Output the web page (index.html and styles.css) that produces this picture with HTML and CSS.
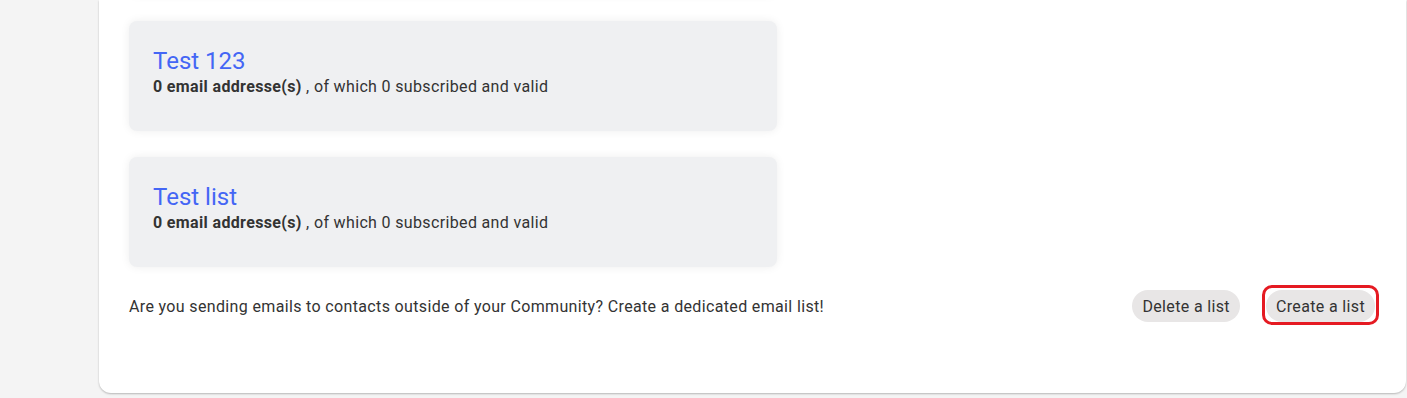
FILE: index.html
```html
<!DOCTYPE html>
<html lang="en">
<head>
    <meta charset="UTF-8">
    <title>Email lists</title>
    <link rel="stylesheet" href="styles.css">
</head>
<body>
<div class="page">
    <div class="side"></div>
    <div class="panel">
        <div class="lists">
            <!-- previous list, scrolled out of view -->
            <div class="card"></div>
            <div class="card">
                <a class="card-title">Test 123</a>
                <p class="card-info"><b>0 email addresse(s)</b> , of which 0 subscribed and valid</p>
            </div>
            <div class="card">
                <a class="card-title">Test list</a>
                <p class="card-info"><b>0 email addresse(s)</b> , of which 0 subscribed and valid</p>
            </div>
        </div>
        <div class="footer">
            <p>Are you sending emails to contacts outside of your Community? Create a dedicated email list!</p>
            <div class="actions">
                <button class="btn">Delete a list</button>
                <button class="btn marked">Create a list</button>
            </div>
        </div>
    </div>
</div>
</body>
</html>
```

FILE: styles.css
```css
html, body {
    margin: 0;
    height: 100%;
    background: #f4f4f4;
    font-family: Roboto, "Liberation Sans", sans-serif;
    color: #333;
    overflow: hidden;
}

.page {
    display: flex;
    height: 393px;
}
.side {
    width: 99px;
    flex: none;
}
.panel {
    width: 1307px;
    background: #fff;
    border-radius: 0 0 12px 12px;
    box-shadow: 0 1px 2px rgba(0,0,0,0.25);
    padding: 0 31px 0 30px;
    box-sizing: border-box;
    display: flex;
    flex-direction: column;
}

.lists {
    display: flex;
    flex-direction: column;
    gap: 26px;
    margin-top: -115px;
}
.card {
    width: 648px;
    height: 110px;
    box-sizing: border-box;
    padding: 25px 24px 0 24px;
    background: #eff0f2;
    border-radius: 8px;
    box-shadow: 0 0 10px rgba(0,0,0,0.07);
}
.card-title {
    display: block;
    font-size: 24px;
    line-height: 30px;
    color: #4466f5;
}
.card-info {
    margin: 0;
    font-size: 16px;
    line-height: 22px;
    letter-spacing: 0.35px;
}
.card-info b {
    font-weight: 700;
}

.footer {
    display: flex;
    align-items: center;
    justify-content: space-between;
    margin-top: 23px;
}
.footer p {
    margin: 0;
    font-size: 16px;
    letter-spacing: 0.35px;
}
.actions {
    display: flex;
    gap: 26px;
}
.btn {
    font-family: inherit;
    font-size: 16px;
    letter-spacing: 0.35px;
    color: #333;
    background: #e8e6e6;
    border: none;
    border-radius: 16px;
    height: 32px;
    padding: 0 10px;
    position: relative;
}
.marked::after {
    content: "";
    position: absolute;
    left: -4px;
    right: -4px;
    top: -5px;
    bottom: -3px;
    border: 3px solid #e51a22;
    border-radius: 10px;
}
```
